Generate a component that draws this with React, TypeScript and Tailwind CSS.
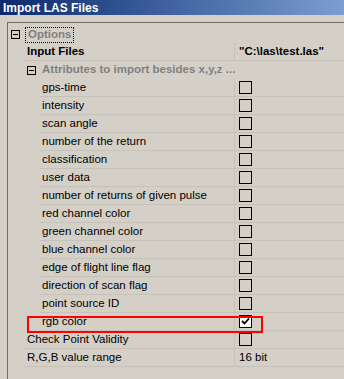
import React from 'react';

const attributes = [
  'gps-time',
  'intensity',
  'scan angle',
  'number of the return',
  'classification',
  'user data',
  'number of returns of given pulse',
  'red channel color',
  'green channel color',
  'blue channel color',
  'edge of flight line flag',
  'direction of scan flag',
  'point source ID',
];

const MinusBox: React.FC = () => (
  <span className="flex h-[9px] w-[9px] flex-shrink-0 items-center justify-center border border-black bg-transparent">
    <span className="h-px w-[5px] bg-black" />
  </span>
);

const CheckBox: React.FC<{ checked?: boolean }> = ({ checked }) => (
  <span
    className={`flex h-[13px] w-[13px] items-center justify-center border border-black ${checked ? 'bg-white' : ''}`}
  >
    {checked && (
      <svg width="9" height="9" viewBox="0 0 9 9">
        <path d="M1 4 L3.5 6.5 L8 1.5" stroke="black" strokeWidth="1.8" fill="none" />
      </svg>
    )}
  </span>
);

// row with a left label and a value cell after the column split
const PropRow: React.FC<{ indent: number; label: string; children?: React.ReactNode; bold?: boolean }> = ({
  indent,
  label,
  children,
  bold,
}) => (
  <div className="flex h-[18px]">
    <div style={{ width: indent }} className="flex-shrink-0" />
    <div className="flex flex-1 border-b border-[#c6c2ba]">
      <div
        className={`flex items-center border-r border-[#c6c2ba] pl-[3px] ${bold ? 'font-bold' : ''}`}
        style={{ width: 235 - 8 - indent }}
      >
        {label}
      </div>
      <div className={`flex flex-1 items-center pl-[4px] ${bold ? 'font-bold' : ''}`}>{children}</div>
    </div>
  </div>
);

const App: React.FC = () => {
  return (
    <div className="relative h-[379px] w-[344px] overflow-hidden bg-[#d4d0c8] font-['Tahoma','Liberation_Sans',sans-serif] text-[11.5px] text-black">
      <div className="flex h-[15px] items-center bg-gradient-to-r from-[#0c2a6e] to-[#7c9ed2] pl-[3px] text-[12px] font-bold leading-none text-white">
        Import LAS Files
      </div>
      <div className="pl-[7px] pt-[7px]">
        <div className="h-[357px] border-l border-t border-[#6f6c66] pt-[3px]">
          {/* Options category */}
          <div className="flex h-[17px] items-center">
            <div className="flex w-[12px] justify-end">
              <MinusBox />
            </div>
            <div className="ml-[5px] flex h-[16px] items-center border border-dotted border-black px-[2px] font-bold text-[#808080]">
              Options
            </div>
          </div>
          <PropRow indent={16} label="Input Files" bold>
            "C:\las\test.las"
          </PropRow>
          {/* Attributes category */}
          <div className="flex h-[18px] items-center">
            <div className="flex w-[28px] justify-end">
              <MinusBox />
            </div>
            <div className="ml-[6px] font-bold text-[#808080]">Attributes to import besides x,y,z ...</div>
          </div>
          {attributes.map((a) => (
            <PropRow key={a} indent={31} label={a}>
              <CheckBox />
            </PropRow>
          ))}
          <PropRow indent={31} label="rgb color">
            <CheckBox checked />
          </PropRow>
          <PropRow indent={16} label="Check Point Validity">
            <CheckBox />
          </PropRow>
          <PropRow indent={16} label="R,G,B value range">
            16 bit
          </PropRow>
        </div>
      </div>
      {/* highlight annotation */}
      <div className="absolute left-[27px] top-[316px] h-[17px] w-[236px] border-2 border-[#ff0000]" />
    </div>
  );
};

export default App;
